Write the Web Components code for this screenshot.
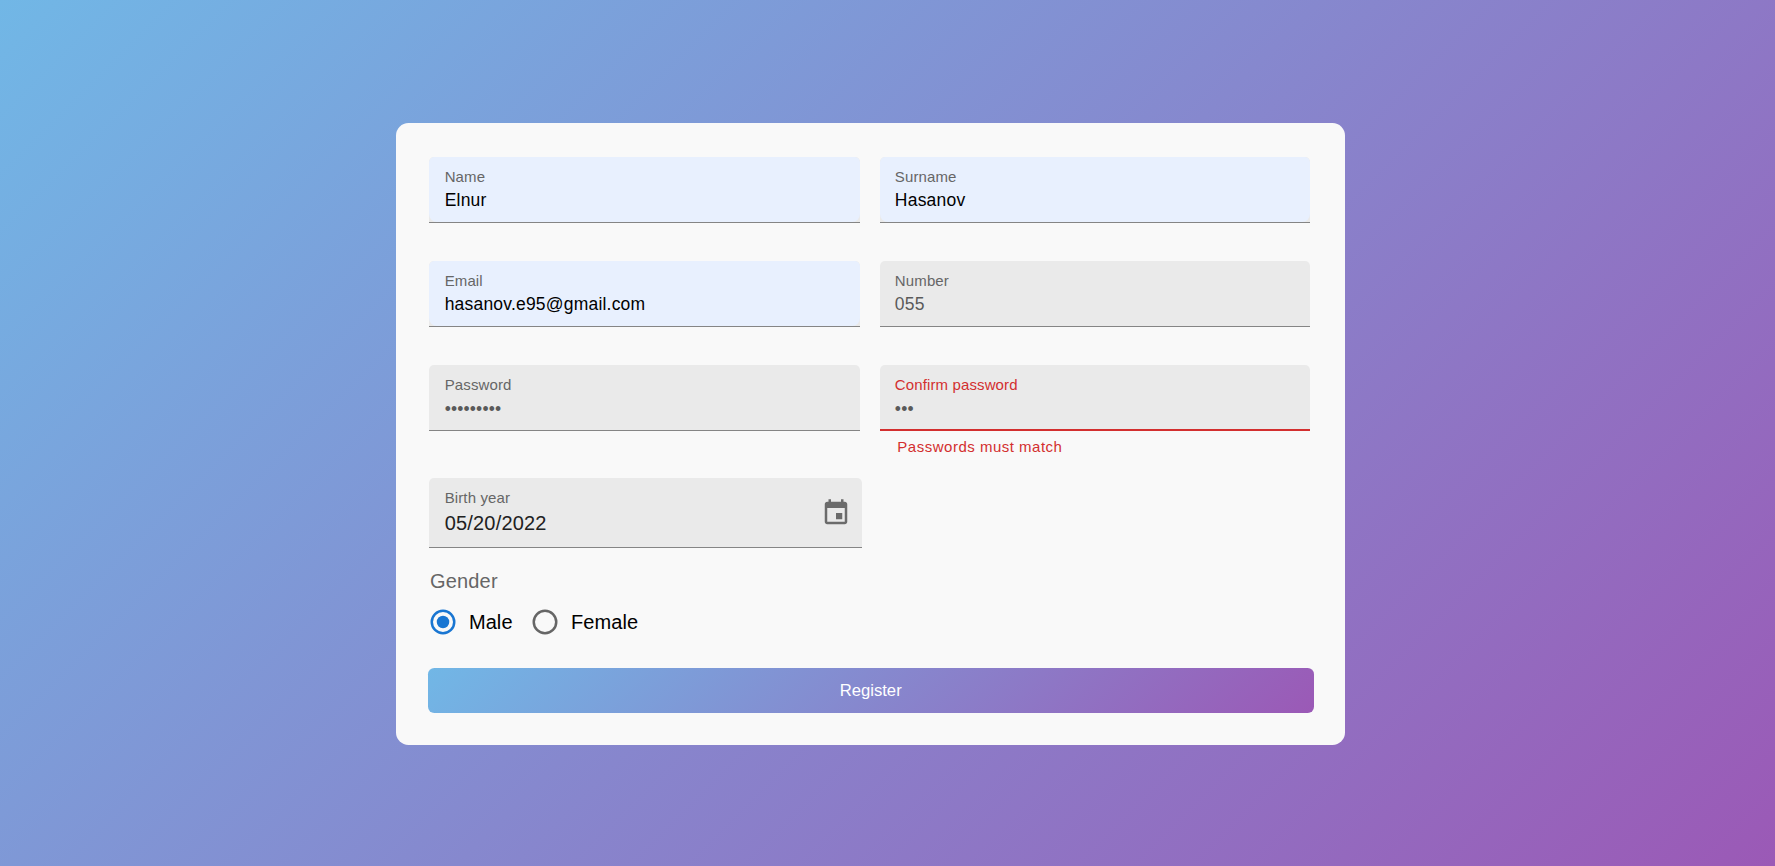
<!DOCTYPE html>
<html lang="en">
<head>
<meta charset="utf-8">
<title>Register</title>
<style>
html,body{margin:0;height:100%}
body{font-family:"Liberation Sans",Arial,sans-serif;overflow:hidden}
</style>
</head>
<body>
<registration-page></registration-page>
<script>
class TextField extends HTMLElement{
  connectedCallback(){
    const a=n=>this.getAttribute(n)||'';
    const root=this.attachShadow({mode:'open'});
    root.innerHTML=`<style>
    :host{display:block;min-width:0}
    .box{box-sizing:border-box;height:66.25px;background:#eaeaea;border-radius:5px 5px 0 0;border-bottom:1.25px solid #858585;display:flex;overflow:hidden}
    .fill{flex:1;padding:10px 15px 0 15.3px;display:flex;flex-direction:column}
    .label{font-size:15px;line-height:20px;letter-spacing:.12px;color:#666}
    .value{font-size:17.5px;line-height:24px;margin-top:1px;color:#5a5a5a;letter-spacing:.2px}
    :host([autofill]) .fill{background:#e8f0fe;border-radius:5px 5px 8px 8px}
    :host([autofill]) .value{color:#000}
    :host([type=password]) .value{letter-spacing:.16px;margin-top:2px}
    :host([error]) .box{border-bottom:2.5px solid #d32f2f}
    :host([error]) .label{color:#d32f2f}
    .help{font-size:15px;line-height:20px;letter-spacing:.5px;color:#d32f2f;margin:6px 0 0 17.8px}
    :host([type=date]) .box{height:70px}
    :host([type=date]) .value{font-size:20px;line-height:26px;margin-top:2px;color:#212121;letter-spacing:.19px}
    ::slotted(svg){width:30px;height:30px;margin:20px 10.3px 0 0;fill:#6b6b6b}
    </style><div class="box"><div class="fill"><span class="label">${a('label')}</span><span class="value">${a('value')}</span></div><slot></slot></div>${a('help')?`<div class="help">${a('help')}</div>`:''}`;
  }
}
class RadioOption extends HTMLElement{
  connectedCallback(){
    const on=this.hasAttribute('checked');
    this.attachShadow({mode:'open'}).innerHTML=`<style>
    :host{display:flex;align-items:center;gap:11px;font-size:20px;line-height:26px;letter-spacing:.1px;color:#000}
    svg{width:30px;height:30px;color:${on?'#1976d2':'#666'}}
    </style><svg viewBox="0 0 24 24"><circle cx="12" cy="12" r="9" fill="none" stroke="currentColor" stroke-width="2"/>${on?'<circle cx="12" cy="12" r="5" fill="currentColor"/>':''}</svg><span><slot></slot></span>`;
  }
}
class SubmitButton extends HTMLElement{
  connectedCallback(){
    this.attachShadow({mode:'open'}).innerHTML=`<style>
    :host{display:block}
    button{display:block;width:100%;height:45px;border:0;border-radius:6.25px;padding:1px 0 0;background:linear-gradient(135deg,#71b7e6,#9b59b6);color:#fff;font:16.67px/20px "Liberation Sans",Arial,sans-serif}
    </style><button type="button"><slot></slot></button>`;
  }
}
class RegistrationPage extends HTMLElement{
  connectedCallback(){
    this.attachShadow({mode:'open'}).innerHTML=`<style>
    :host{display:flex;box-sizing:border-box;height:100vh;padding:123.3px 0 0 396.4px;align-items:flex-start;background:linear-gradient(135deg,#71b7e6,#9b59b6)}
    .card{box-sizing:border-box;width:948.4px;height:621.7px;background:#f9f9f9;border-radius:12.5px;padding:33.7px 31px 0 31.2px;display:flex;flex-direction:column}
    .grid{display:grid;grid-template-columns:430.4px 430.4px;column-gap:19.8px;grid-template-rows:104px 104px 113px 70px;margin-left:1.8px}
    .date{width:432.3px}
    .gender{font-size:20px;line-height:26px;letter-spacing:.15px;color:#666;margin:20px 0 0 2.5px}
    .radios{display:flex;gap:17.3px;margin:13px 0 0 .3px}
    submit-button{margin-top:31px}
    </style>
    <form class="card">
      <div class="grid">
        <text-field autofill label="Name" value="Elnur"></text-field>
        <text-field autofill label="Surname" value="Hasanov"></text-field>
        <text-field autofill label="Email" value="hasanov.e95@gmail.com"></text-field>
        <text-field label="Number" value="055"></text-field>
        <text-field type="password" label="Password" value="•••••••••"></text-field>
        <text-field type="password" error label="Confirm password" value="•••" help="Passwords must match"></text-field>
        <text-field class="date" type="date" label="Birth year" value="05/20/2022"><svg viewBox="0 0 24 24"><path d="M17 12h-5v5h5v-5zM16 1v2H8V1H6v2H5c-1.11 0-1.99.9-1.99 2L3 19c0 1.1.89 2 2 2h14c1.1 0 2-.9 2-2V5c0-1.1-.9-2-2-2h-1V1h-2zm3 18H5V8h14v11z"/></svg></text-field>
      </div>
      <div class="gender">Gender</div>
      <div class="radios"><radio-option checked>Male</radio-option><radio-option>Female</radio-option></div>
      <submit-button>Register</submit-button>
    </form>`;
  }
}
customElements.define('text-field',TextField);
customElements.define('radio-option',RadioOption);
customElements.define('submit-button',SubmitButton);
customElements.define('registration-page',RegistrationPage);
</script>
</body>
</html>
